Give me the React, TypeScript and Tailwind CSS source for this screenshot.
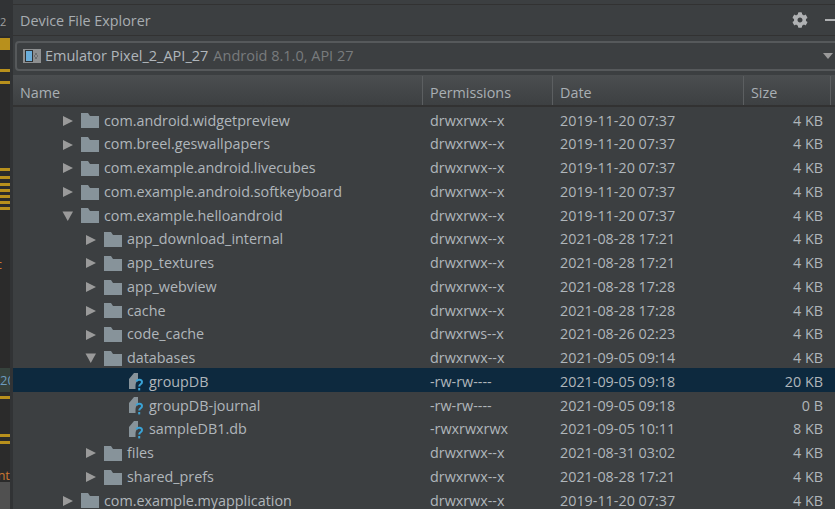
import { FaCog } from "react-icons/fa";

type Row = { name: string; depth: 1 | 2 | 3; kind: "closed" | "open" | "file"; perm: string; date: string; size: string; selected?: boolean };

const rows: Row[] = [
  { name: "com.android.widgetpreview", depth: 1, kind: "closed", perm: "drwxrwx--x", date: "2019-11-20 07:37", size: "4 KB" },
  { name: "com.breel.geswallpapers", depth: 1, kind: "closed", perm: "drwxrwx--x", date: "2019-11-20 07:37", size: "4 KB" },
  { name: "com.example.android.livecubes", depth: 1, kind: "closed", perm: "drwxrwx--x", date: "2019-11-20 07:37", size: "4 KB" },
  { name: "com.example.android.softkeyboard", depth: 1, kind: "closed", perm: "drwxrwx--x", date: "2019-11-20 07:37", size: "4 KB" },
  { name: "com.example.helloandroid", depth: 1, kind: "open", perm: "drwxrwx--x", date: "2019-11-20 07:37", size: "4 KB" },
  { name: "app_download_internal", depth: 2, kind: "closed", perm: "drwxrwx--x", date: "2021-08-28 17:21", size: "4 KB" },
  { name: "app_textures", depth: 2, kind: "closed", perm: "drwxrwx--x", date: "2021-08-28 17:21", size: "4 KB" },
  { name: "app_webview", depth: 2, kind: "closed", perm: "drwxrwx--x", date: "2021-08-28 17:28", size: "4 KB" },
  { name: "cache", depth: 2, kind: "closed", perm: "drwxrwx--x", date: "2021-08-28 17:28", size: "4 KB" },
  { name: "code_cache", depth: 2, kind: "closed", perm: "drwxrws--x", date: "2021-08-26 02:23", size: "4 KB" },
  { name: "databases", depth: 2, kind: "open", perm: "drwxrwx--x", date: "2021-09-05 09:14", size: "4 KB" },
  { name: "groupDB", depth: 3, kind: "file", perm: "-rw-rw----", date: "2021-09-05 09:18", size: "20 KB", selected: true },
  { name: "groupDB-journal", depth: 3, kind: "file", perm: "-rw-rw----", date: "2021-09-05 09:18", size: "0 B" },
  { name: "sampleDB1.db", depth: 3, kind: "file", perm: "-rwxrwxrwx", date: "2021-09-05 10:11", size: "8 KB" },
  { name: "files", depth: 2, kind: "closed", perm: "drwxrwx--x", date: "2021-08-31 03:02", size: "4 KB" },
  { name: "shared_prefs", depth: 2, kind: "closed", perm: "drwxrwx--x", date: "2021-08-28 17:21", size: "4 KB" },
  { name: "com.example.myapplication", depth: 1, kind: "closed", perm: "drwxrwx--x", date: "2019-11-20 07:37", size: "4 KB" },
];

const marks: [number, number][] = [
  [38, 12], [69, 3], [81, 3], [168, 3], [176, 3], [183, 3], [189, 3], [195, 3], [201, 3], [207, 3], [396, 3], [434, 3], [441, 3],
];

function Arrow({ open }: { open: boolean }) {
  return (
    <svg width="12" height="12" viewBox="0 0 12 12" className="shrink-0">
      {open ? <path d="M0.5 1.5H11L5.75 11Z" fill="#9a9a9a" /> : <path d="M1 1L11 6L1 11Z" fill="#9a9a9a" />}
    </svg>
  );
}

function Folder() {
  return (
    <svg width="18" height="15" viewBox="0 0 18 15" className="shrink-0">
      <path d="M0 0H7L9 3H18V15H0Z" fill="#87939a" />
    </svg>
  );
}

function FileQ() {
  return (
    <svg width="14" height="18" viewBox="0 0 14 18" className="shrink-0">
      <path d="M0 6L5 0H9V7.5C7.5 8.5 6.5 10 6.5 13V16H0Z" fill="#87939a" />
      <path d="M7.5 8.5C8 6 13 6 13 9C13 11.5 10.2 11 10.2 13.5" fill="none" stroke="#3aa3d6" strokeWidth="2" />
      <rect x="9.2" y="15" width="2" height="2.4" fill="#3aa3d6" />
    </svg>
  );
}

function TreeRow({ row }: { row: Row }) {
  const indent = row.depth === 1 ? "pl-[49px]" : row.depth === 2 ? "pl-[72px]" : "pl-[116px]";
  return (
    <div className={`grid h-[23.75px] grid-cols-[409px_130px_191px_80px] items-center pt-[4px] ${row.selected ? "bg-[#0d293e]" : ""}`}>
      <div className={`flex items-center ${indent}`}>
        {row.kind === "file" ? (
          <span className="flex items-center gap-[6px]">
            <FileQ />
            <span>{row.name}</span>
          </span>
        ) : (
          <span className="flex items-center">
            <Arrow open={row.kind === "open"} />
            <span className="ml-[7px]"><Folder /></span>
            <span className="ml-[5px]">{row.name}</span>
          </span>
        )}
      </div>
      <div className="pl-2">{row.perm}</div>
      <div className="pl-2">{row.date}</div>
      <div className="text-right">{row.size}</div>
    </div>
  );
}

function HeaderCell({ label, className }: { label: string; className: string }) {
  return <div className={`flex h-[29px] items-center pl-[7px] pt-[7px] ${className}`}>{label}</div>;
}

export default function App() {
  return (
    <div className="flex h-[509px] w-[835px] overflow-hidden bg-[#3c3f41] font-['Open_Sans',sans-serif] text-[14.35px] leading-none text-[#b0b6bb]">
      <div className="relative w-[10px] shrink-0 overflow-hidden bg-[#2b2b2b]">
        <div className="flex h-[36px] items-center bg-[#313335] pt-[6px] text-[11px] text-[#a0a0a0]">2</div>
        {marks.map(([top, h]) => (
          <div key={top} className="absolute left-0 w-[10px] bg-[#b8901c]" style={{ top, height: h }} />
        ))}
        <div className="absolute right-[8px] top-[258px] text-[13px] text-[#cc7832]">c</div>
        <div className="absolute left-0 top-[368px] flex h-[24px] w-[10px] items-center overflow-hidden bg-[#36423c] text-[13px] text-[#6d9cbe]">20</div>
        <div className="absolute bottom-[27px] left-0 flex w-[10px] justify-end overflow-hidden text-[13px] text-[#cc7832]">nt</div>
        <div className="absolute bottom-0 left-0 h-[27px] w-[10px] bg-[#505050]" />
      </div>
      <div className="w-[3px] shrink-0 bg-[#313335]" />
      <div className="flex min-w-0 flex-1 flex-col">
        <div className="mt-[4px] flex h-[32px] shrink-0 items-center justify-between border-y border-[#323232] pl-[7px]">
          <span className="pt-[3px] text-[#a8adb1]">Device File Explorer</span>
          <span className="flex items-center gap-[17px]">
            <FaCog size={16} color="#afb1b3" />
            <span className="h-[2px] w-[10px] bg-[#afb1b3]" />
          </span>
        </div>
        <div className="flex h-[39px] shrink-0 items-center pl-[2px]">
          <div className="-mr-[8px] flex h-[30px] flex-1 items-center gap-[4px] rounded-[4px] border-2 border-[#56595b] pl-[6px] text-[14.5px]">
            <svg width="18" height="14" viewBox="0 0 18 14" className="shrink-0">
              <rect width="18" height="14" fill="#8e9091" />
              <rect x="2" y="1" width="8" height="12" fill="#2f3234" />
              <rect x="3" y="2" width="6" height="10" fill="#6aaedb" />
              <path d="M13 4V6M13 8V10M11 7H12M14 7H15" stroke="#4a4c4e" />
            </svg>
            <span className="pt-[2px]">Emulator Pixel_2_API_27</span>
            <span className="ml-[1px] pt-[2px] text-[#787b7d]">Android 8.1.0, API 27</span>
            <svg width="10" height="6" viewBox="0 0 10 6" className="ml-auto mr-[8px] shrink-0">
              <path d="M0 0H10L5 6Z" fill="#9a9a9a" />
            </svg>
          </div>
        </div>
        <div className="grid h-[32px] shrink-0 grid-cols-[409px_130px_191px_88px] items-center border-b-2 border-[#323232] bg-gradient-to-b from-[#4b4e50] to-[#3d4042] text-[#a9afb4]">
          <HeaderCell label="Name" className="" />
          <HeaderCell label="Permissions" className="border-l border-[#5c5f61]" />
          <HeaderCell label="Date" className="border-l border-[#5c5f61]" />
          <HeaderCell label="Size" className="border-x border-[#5c5f61]" />
        </div>
        <div className="min-h-0 flex-1 overflow-hidden">
          {rows.map((r) => (
            <TreeRow key={r.name} row={r} />
          ))}
        </div>
      </div>
    </div>
  );
}
